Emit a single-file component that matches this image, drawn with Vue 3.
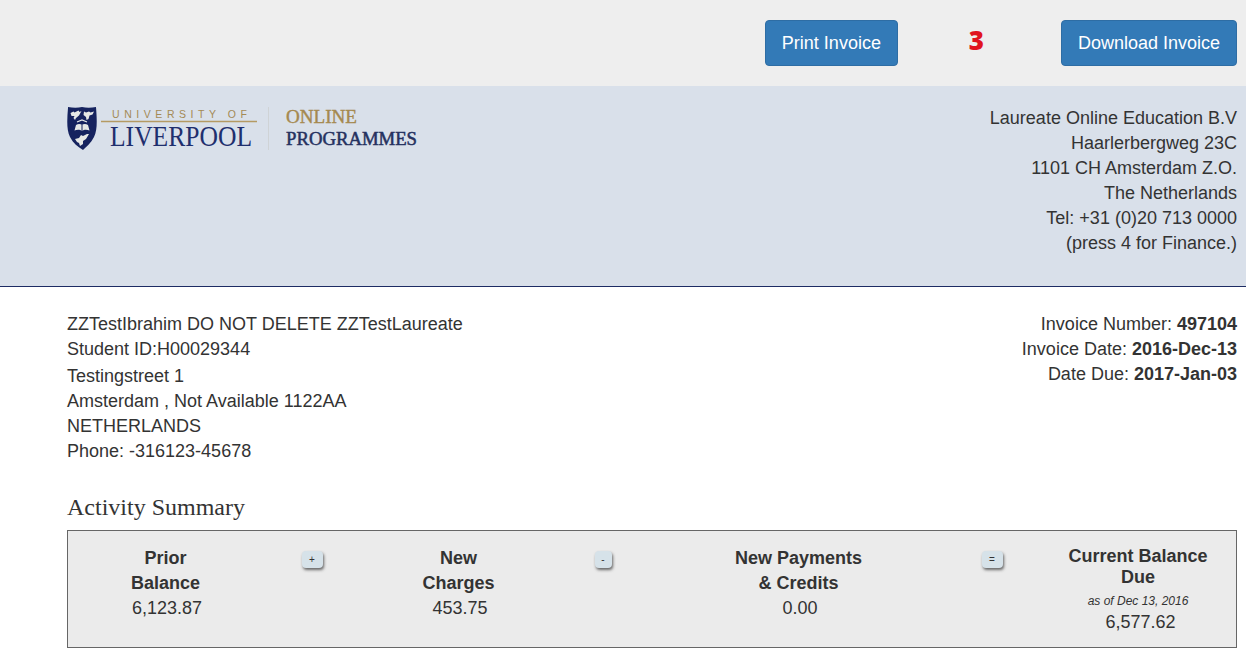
<template>
  <div class="page">
    <!-- top buttons -->
    <div class="topbar">
      <a class="btn">Print Invoice</a>
      <span class="step">3</span>
      <a class="btn">Download Invoice</a>
    </div>

    <!-- letterhead -->
    <div class="letterhead">
      <svg class="logo" width="352" height="50" viewBox="0 0 352 50">
        <path d="M1 1 C6 2 11 2 15 1 C19 2 24 2 29 1 C30 14 30.5 24 27 31 C24 37 19 41 16 44 C11 41 6 37 3 31 C-0.5 24 0 14 1 2 Z" fill="#16235f" />
        <path d="M3.5 7 l3 -1.5 l1 1 l4 -2 l1 1.5 l2 -1 l-2.5 4.5 l-3 2.5 l-1 2 l-1.5 -2 l1 -2 l-3 0 Z" fill="#e6e8e6" />
        <path d="M17 5.5 l2 1 l3 -1 l1.5 1 l3.5 -1 l-1.5 3 l-3 1 l-1 3.5 l-2 1 l-0.5 -3 l-2.5 -2 Z" fill="#e6e8e6" />
        <path d="M9 19 C11 17.5 13.5 17.5 15 19 C16.5 17.5 19 17.5 21 19 L22.5 24.5 C20 23.5 17 23.5 15 25 C13 23.5 10 23.5 7.5 24.5 Z" fill="#e6e8e6" />
        <path d="M15 19 V25" stroke="#16235f" stroke-width="1" />
        <path d="M10 16 L15 14 L20 16" fill="none" stroke="#e6e8e6" stroke-width="1.2" />
        <path d="M8 33 l4 -1 l2 -3 l2 1 l4 -2 l2 0 l-3 5 l-3 2 l0 3 l-3 2 l-1 -3 l-2 -1 Z" fill="#e6e8e6" />
        <line x1="34" y1="15.5" x2="190" y2="15.5" stroke="#b59a63" stroke-width="1.4" />
        <text x="45" y="12" class="logo-uni" textLength="135">UNIVERSITY OF</text>
        <text x="43" y="39.5" class="logo-liv" textLength="142" lengthAdjust="spacingAndGlyphs">LIVERPOOL</text>
        <line x1="201.5" y1="1" x2="201.5" y2="44" stroke="#cfd3d6" stroke-width="1" />
        <text x="219" y="17" class="logo-online" textLength="71" lengthAdjust="spacingAndGlyphs">ONLINE</text>
        <text x="219" y="39" class="logo-prog" textLength="131" lengthAdjust="spacingAndGlyphs">PROGRAMMES</text>
      </svg>
      <div class="company">
        <div>Laureate Online Education B.V</div>
        <div>Haarlerbergweg 23C</div>
        <div>1101 CH Amsterdam Z.O.</div>
        <div>The Netherlands</div>
        <div>Tel: +31 (0)20 713 0000</div>
        <div>(press 4 for Finance.)</div>
      </div>
    </div>

    <!-- student + invoice info -->
    <div class="info">
      <div class="student">
        <div>ZZTestIbrahim DO NOT DELETE ZZTestLaureate</div>
        <div class="student-id">Student ID:H00029344</div>
        <div>Testingstreet 1</div>
        <div>Amsterdam , Not Available 1122AA</div>
        <div>NETHERLANDS</div>
        <div>Phone: -316123-45678</div>
      </div>
      <div class="invoice-meta">
        <div v-for="row in meta" :key="row.label">{{ row.label }}: <b>{{ row.value }}</b></div>
      </div>
    </div>

    <h2 class="section-title">Activity Summary</h2>

    <div class="summary">
      <div class="col">
        <b class="title">Prior<br />Balance</b>
        <div>6,123.87</div>
      </div>
      <div class="op"><span class="chip">+</span></div>
      <div class="col">
        <b class="title">New<br />Charges</b>
        <div>453.75</div>
      </div>
      <div class="op"><span class="chip chip-narrow">-</span></div>
      <div class="col">
        <b class="title">New Payments<br />&amp; Credits</b>
        <div>0.00</div>
      </div>
      <div class="op"><span class="chip">=</span></div>
      <div class="col col-due">
        <b class="due-title">Current Balance<br />Due</b>
        <div class="as-of">as of Dec 13, 2016</div>
        <div class="due-value">6,577.62</div>
      </div>
    </div>
  </div>
</template>

<script setup>
const meta = [
  { label: 'Invoice Number', value: '497104' },
  { label: 'Invoice Date', value: '2016-Dec-13' },
  { label: 'Date Due', value: '2017-Jan-03' },
]
</script>

<style>
html,
body {
  margin: 0;
  background: #fff;
  overflow: hidden;
}
</style>

<style scoped>
.page {
  font-family: 'Liberation Sans', Arial, sans-serif;
  font-size: 18px;
  line-height: 25px;
  color: #333;
}

.topbar {
  height: 86px;
  box-sizing: border-box;
  padding: 20px 9px 0 0;
  background: #eee;
  display: flex;
  justify-content: flex-end;
  align-items: flex-start;
}

.btn {
  height: 46px;
  box-sizing: border-box;
  padding: 0 16px;
  line-height: 44px;
  background: #337ab7;
  border: 1px solid #2e6da4;
  border-radius: 4px;
  color: #fff;
}

.step {
  width: 163px;
  box-sizing: border-box;
  padding-right: 6px;
  text-align: center;
  font-family: 'Open Sans', sans-serif;
  font-size: 26px;
  font-weight: 800;
  line-height: 40px;
  color: #e0141e;
}

.letterhead {
  height: 201px;
  box-sizing: border-box;
  padding: 20px 9px 0 67px;
  background: #d9e0ea;
  border-bottom: 1px solid #1d2c64;
  display: flex;
  justify-content: space-between;
  align-items: flex-start;
}

.logo {
  display: block;
}

.logo-uni {
  font-family: 'Liberation Sans', sans-serif;
  font-size: 10.5px;
  fill: #a48a55;
}

.logo-liv {
  font-family: 'Liberation Serif', serif;
  font-size: 30px;
  fill: #1f2f6e;
}

.logo-online {
  font-family: 'Liberation Serif', serif;
  font-size: 19px;
  fill: #a5894f;
  stroke: #a5894f;
  stroke-width: 0.4;
}

.logo-prog {
  font-family: 'Liberation Serif', serif;
  font-size: 18px;
  fill: #25315f;
  stroke: #25315f;
  stroke-width: 0.5;
}

.company {
  text-align: right;
}

.info {
  display: flex;
  justify-content: space-between;
  padding: 25px 9px 0 67px;
}

.student-id {
  margin-bottom: 2px;
}

.invoice-meta {
  text-align: right;
}

.section-title {
  margin: 28px 0 8px 67px;
  font-family: 'Liberation Serif', serif;
  font-size: 24px;
  font-weight: 400;
  line-height: 30px;
}

.summary {
  margin: 0 9px 0 67px;
  height: 118px;
  box-sizing: border-box;
  padding-top: 15px;
  background: #ebebeb;
  border: 1px solid #666;
  display: grid;
  grid-template-columns: 198px 94px 200px 88px 304px 82px 202px;
  text-align: center;
}

.title {
  display: block;
  padding-right: 3px;
}

.op {
  padding: 5px 2px 0 0;
}

.chip {
  display: block;
  width: 21px;
  height: 17px;
  margin: 0 auto;
  font-size: 10px;
  line-height: 17px;
  background: #d6e2e9;
  border-radius: 4px;
  box-shadow: 1px 2px 3px #666;
}

.chip-narrow {
  width: 17px;
}

.col-due {
  padding-left: 6px;
}

.due-title {
  display: block;
  line-height: 21px;
}

.as-of {
  margin-top: 4px;
  font-size: 12px;
  font-style: italic;
  line-height: 18px;
}

.due-value {
  padding-left: 5px;
}
</style>
